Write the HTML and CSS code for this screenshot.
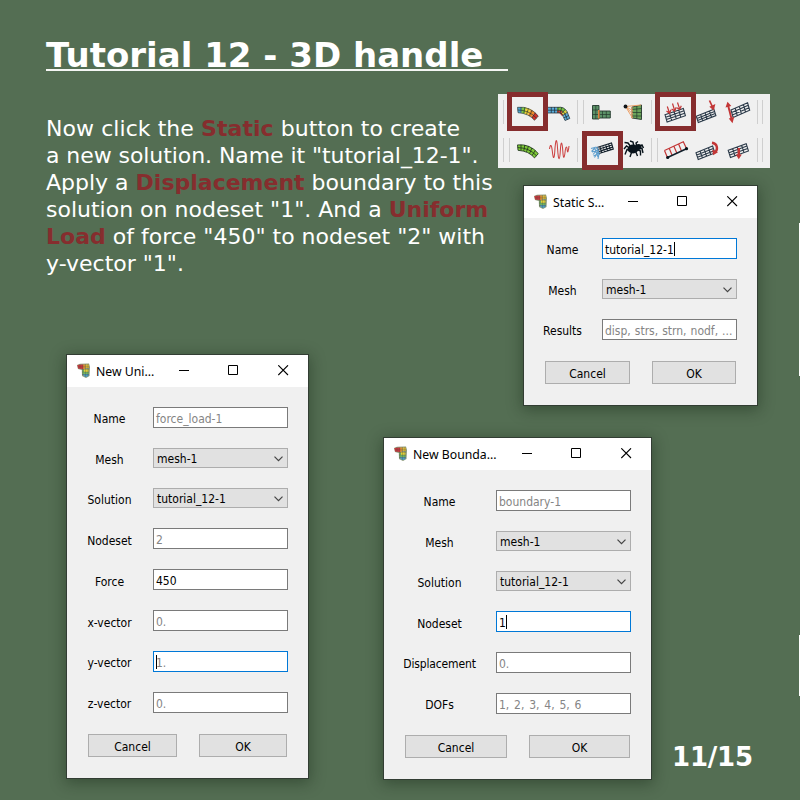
FILE: index.html
```
<!DOCTYPE html>
<html lang="en">
<head>
<meta charset="utf-8">
<title>Tutorial 12 - 3D handle</title>
<link rel="stylesheet" href="styles.css">
</head>
<body>
<svg width="0" height="0" class="defs">
  <defs>
    <symbol id="app" viewBox="0 0 13 15">
      <path d="M0 2L3 0.8L12 0.6L13 4L12.500 13L9 15L5 13L4.800 7L1 6Z" fill="#8b9878"/>
      <path d="M0.500 2L6 1.500V6L1 5.500Z" fill="#c8373f"/>
      <path d="M6 1.500H8.500V5L6 6.500Z" fill="#d98a35"/>
      <path d="M8.500 1.500H12V5H8.500Z" fill="#d9b93a"/>
      <path d="M7 6H11.500V9H7Z" fill="#dfd23c"/>
      <path d="M5.500 7H7V11H5.500ZM7 9H11.500V11H7Z" fill="#72b562"/>
      <path d="M5.500 11H12L11 13.500L8 14Z" fill="#4b9cc0"/>
      <path d="M1 3.800H12M8.500 1V14M11 1V13M5.800 2V12M3 1.500V6M5 6.500H12M5 9H12M5 11.500H12" stroke="#4a4d3e" stroke-width=".4" fill="none" opacity=".7"/>
    </symbol>
    <symbol id="min" viewBox="0 0 11 11"><path d="M0 5.500H10" stroke="#000"/></symbol>
    <symbol id="max" viewBox="0 0 11 11"><path d="M.5.5H9.500V9.500H.5Z" stroke="#000" fill="none"/></symbol>
    <symbol id="close" viewBox="0 0 11 11"><path d="M.3.300L10 10M10 .300L.3 10" stroke="#000" fill="none" stroke-width="1.100"/></symbol>
    <symbol id="chev" viewBox="0 0 9 6"><path d="M.5.700L4.500 4.700L8.500.700" stroke="#444" fill="none" stroke-width="1.200"/></symbol>
    <path id="mesh" d="M0 0H4V3H0ZM1 0V3M2 0V3M3 0V3M0 1H4M0 2H4" vector-effect="non-scaling-stroke"/>
    <path id="mesh5" d="M0 0H5V3H0ZM1 0V3M2 0V3M3 0V3M4 0V3M0 1H5M0 2H5" vector-effect="non-scaling-stroke"/>
    <path id="beam" d="M517.500 107.300Q530 106 538.300 116L534.500 120.300Q529 113.500 518 112.700ZM517.700 110Q529 110 536.500 118.200M521 107V112.800M524.800 107.300L523.800 113.300M528.500 108.500L526.500 114.300M532 110.300L529.500 116M535.300 112.800L532 118"/>
  </defs>
</svg>

<main class="slide">
  <h1 class="title">Tutorial 12 - 3D handle&nbsp;&nbsp;</h1>
  <p class="intro"><span class="loose">Now click the <b>Static</b> button to create</span><br>
    <span class="tight">a new solution. Name it "tutorial_12-1".</span><br>
    Apply a <b>Displacement</b> boundary to this<br>
    solution on nodeset "1". And a <b>Uniform</b><br>
    <b>Load</b> of force "450" to nodeset "2" with<br>
    y-vector "1".</p>

  <svg class="toolbar" viewBox="498 94 272 74">
    <rect x="498" y="94" width="272" height="74" fill="#f0f0f0"/>
    <path d="M503.500 100V124M577.500 100V124M583.500 100V124M651.500 100V124M757.500 100V124M762.500 100V124M503.500 138V162M509.500 138V162M577.500 138V162M651.500 138V162M657.500 138V162M757.500 138V162M762.500 138V162" stroke="#cfcfcf"/>
    <!-- static -->
    <path d="M517.500 107.300H522L521.500 113L518 112.700Z" fill="#4da5d4"/>
    <path d="M521.500 107.300L526 107.500L525 113.700L521.500 113Z" fill="#7dc83f"/>
    <path d="M526 107.500L531 109.600L528 115L524.500 113.700Z" fill="#f2d235"/>
    <path d="M531 109.600L535 112.500L531.500 117.300L528 115Z" fill="#ee8a2a"/>
    <path d="M535 112.500L538.300 116L534.500 120.300L531.500 117.300Z" fill="#d42f2a"/>
    <use href="#beam" fill="none" stroke="#27332f" stroke-width=".65"/>
    <!-- modal beam -->
    <path d="M548 107.300H557V113H548Z" fill="#5aadda"/>
    <path d="M557 107.300Q563 106 566 110.500L561.500 113.500Q560 112.500 557 113Z" fill="#79c83f"/>
    <path d="M557 110.500L561 110.300L564.500 114L562 116L559 112.800L557 113Z" fill="#dc4230"/>
    <path d="M566 110L567.500 113L563 115L561.500 112.500Z" fill="#d9cf3d"/>
    <path d="M567.500 113L569.800 118.500L565 120.500L563 115Z" fill="#5aadda"/>
    <path d="M548 107.300H558Q564 106.500 567 111.500L569.800 118.500L565 120.500L562 114Q560 112.500 557 113H548M548 110.200H558Q563 110 565 114L567.300 119.500M551.300 107V113M554.600 107V113M558 107V113M561.800 107.400L560 113M565.200 109.300L561.500 113.500M567.300 112.300L563 115.500M568.600 115.500L564 117.800" fill="none" stroke="#22303a" stroke-width=".75"/>
    <!-- buckling -->
    <path d="M592.500 105.500H599V119H592.500ZM599 111H610.300V118H599Z" fill="#5b9167" stroke="#24382c" stroke-width=".9"/>
    <path d="M592.500 110H599M592.500 114.500H599M595.800 105.500V119M602.500 111V118M606.300 111V118M599 114.500H610.300" stroke="#24382c" stroke-width=".7"/>
    <path d="M598.800 110V118.500" stroke="#e0843f" stroke-width="1.600"/>
    <!-- coupling -->
    <path d="M632 107L641.500 105V119.500L632 118Z" fill="#6ba35a" stroke="#24382c" stroke-width=".9"/>
    <path d="M636.800 106V119M632 112.500H641.500M632 116H641.500M632 109.500L641.500 108.500" stroke="#24382c" stroke-width=".7"/>
    <path d="M625.500 106.500L641 105M625.500 106.500L632.500 110.500M625.500 106.500L632.500 114M625.500 106.500L632.500 118M632 107V118.500" stroke="#eda066" stroke-width="1" fill="none"/>
    <circle cx="625.500" cy="106.500" r="1.900" fill="#10151a"/>
    <!-- uniform load -->
    <use href="#mesh" transform="matrix(4.580 -1.580 .7 2.450 665 114.700)" class="mesh"/>
    <path d="M667.300 106.500L669.500 113M672.500 103.500L674.500 110M677.500 102.500L679.500 108.500M666.500 111L669.500 113.300L671 109.800M671.600 109L674.700 111L676.200 107.300M676.800 107.800L679.700 109.500L681.300 105.800" class="red"/>
    <!-- point load -->
    <use href="#mesh" transform="matrix(4.400 -1.750 .67 2.100 696.300 116.300)" class="mesh"/>
    <path d="M709.500 100.500L713 108" stroke="#c33636" stroke-width="1.700"/>
    <path d="M709.300 106.800L715.400 104L713.800 110.500Z" fill="#c33636"/>
    <!-- double arrow -->
    <use href="#mesh" transform="matrix(4.150 -1.800 .7 2.500 731 110)" class="mesh"/>
    <path d="M728 105L731.800 120" stroke="#c33636" stroke-width="1.900"/>
    <path d="M725.500 107.500L727.500 101.800L731.300 106ZM728.800 118.500L734.200 117L732.500 123.200Z" fill="#c33636"/>
    <!-- dynamic beam -->
    <g transform="translate(0 37.600)"><use href="#beam" fill="#80cc38" stroke="#20351f" stroke-width=".85"/></g>
    <!-- wave -->
    <path d="M549.500 149C550.500 143.500 551.500 144.500 552.300 151C553.500 162 554.500 158 555 148C556 137 557 139 557.600 149C558.500 163 559.800 160 560.300 151C561 139 562.200 142 562.800 151C563.400 161 564.500 158 565.300 150C566 146 567 146 567.200 150C567.500 154 568.500 151 569 146" fill="none" stroke="#cc4242" stroke-width="1.050"/>
    <!-- boundary -->
    <use href="#mesh5" transform="matrix(2.900 -.9 .6 2.050 597 147.500)" class="mesh dark"/>
    <path d="M591 148.500L596.500 147M592 152L597.500 150.500M593.500 156L598.500 153.500M597 147L599.500 155M595.500 147.500L591.500 151.500M597.500 149.500L593 154.500M598 152L594.500 157.500M599 154L598 159M594.500 147.500L598 157" stroke="#5f9fce" stroke-width="1.100" fill="none"/>
    <!-- spider -->
    <ellipse cx="633" cy="149" rx="5.500" ry="4.400" fill="#08131b"/>
    <circle cx="638.500" cy="147" r="3" fill="#08131b"/>
    <path d="M631 147L628 143L624.500 142.500M631 149L626.500 146L624 149M631 150L627 149.500L625 154.500M632 151L630 157M634 147L633 142L630 141M637 147L636 143L638 141.500M638 147L642 145L643.500 148M638 148L642 148.500L643 153M636 149L640.500 151L640.500 155.500M635 150L637.500 156" stroke="#08131b" stroke-width="1.400" fill="none"/>
    <!-- line load -->
    <path d="M664.500 150.500L683.300 141.800L686.500 148.500M664.500 150.500L667.300 157.300M669.200 148.300L672 155M673.900 146.200L676.800 153M678.600 144L681.500 151" class="red"/>
    <path d="M667.500 157.500L686.500 148.700" stroke="#10202c" stroke-width="1.500"/>
    <circle cx="667.700" cy="157.500" r="1.600" fill="#08131b"/><circle cx="686.500" cy="148.700" r="1.600" fill="#08131b"/>
    <!-- moment -->
    <use href="#mesh" transform="matrix(4.150 -1.650 .75 2.300 696 152.700)" class="mesh"/>
    <path d="M712 142.800C717.500 143.500 718 149 715.500 152" fill="none" stroke="#c33636" stroke-width="2.400"/>
    <path d="M712.300 149.500L718 152.300L713 155.200Z" fill="#c33636"/>
    <!-- gravity -->
    <use href="#mesh" transform="matrix(4.500 -1.650 .75 2.400 728.200 150.300)" class="mesh"/>
    <path d="M738.800 148V156" stroke="#c33636" stroke-width="2.400"/>
    <path d="M735.800 154.500H741.800L738.800 159.200Z" fill="#c33636"/>
    <!-- highlights -->
    <path d="M509.500 94.500H545.500V128.500H509.500ZM584.500 133.500H620.500V167.500H584.500ZM657.500 94.500H693.500V128.500H657.500Z" fill="none" stroke="#862d2e" stroke-width="5"/>
  </svg>

  <section class="window static">
    <header class="bar"><svg class="app"><use href="#app"/></svg><span class="caption">Static S...</span>
      <svg class="ctl"><use href="#min"/></svg><svg class="ctl"><use href="#max"/></svg><svg class="ctl"><use href="#close"/></svg></header>
    <div class="form">
      <label>Name</label><div class="input focus">tutorial_12-1<i class="caret"></i></div>
      <label>Mesh</label><div class="combo">mesh-1<svg><use href="#chev"/></svg></div>
      <label>Results</label><div class="input hint results">disp, strs, strn, nodf, ...</div>
    </div>
    <div class="actions"><div class="button">Cancel</div><div class="button">OK</div></div>
  </section>

  <section class="window uniform">
    <header class="bar"><svg class="app"><use href="#app"/></svg><span class="caption">New Uni...</span>
      <svg class="ctl"><use href="#min"/></svg><svg class="ctl"><use href="#max"/></svg><svg class="ctl"><use href="#close"/></svg></header>
    <div class="form">
      <label>Name</label><div class="input hint">force_load-1</div>
      <label>Mesh</label><div class="combo">mesh-1<svg><use href="#chev"/></svg></div>
      <label>Solution</label><div class="combo">tutorial_12-1<svg><use href="#chev"/></svg></div>
      <label class="low">Nodeset</label><div class="input hint">2</div>
      <label class="low">Force</label><div class="input">450</div>
      <label class="low">x-vector</label><div class="input hint">0.</div>
      <label>y-vector</label><div class="input hint focus"><i class="caret start"></i>1.</div>
      <label>z-vector</label><div class="input hint">0.</div>
    </div>
    <div class="actions"><div class="button">Cancel</div><div class="button">OK</div></div>
  </section>

  <section class="window boundary">
    <header class="bar"><svg class="app"><use href="#app"/></svg><span class="caption">New Bounda...</span>
      <svg class="ctl"><use href="#min"/></svg><svg class="ctl"><use href="#max"/></svg><svg class="ctl"><use href="#close"/></svg></header>
    <div class="form">
      <label>Name</label><div class="input hint">boundary-1</div>
      <label>Mesh</label><div class="combo">mesh-1<svg><use href="#chev"/></svg></div>
      <label>Solution</label><div class="combo">tutorial_12-1<svg><use href="#chev"/></svg></div>
      <label class="low">Nodeset</label><div class="input focus">1<i class="caret"></i></div>
      <label class="long">Displacement</label><div class="input hint">0.</div>
      <label>DOFs</label><div class="input hint dofs">1, 2, 3, 4, 5, 6</div>
    </div>
    <div class="actions"><div class="button">Cancel</div><div class="button">OK</div></div>
  </section>

  <div class="page">11/15</div>
  <div class="edge upper"></div>
  <div class="edge lower"></div>
</main>
</body>
</html>
```
FILE: styles.css
```
* { box-sizing: border-box; }
body { margin: 0; }
.defs { position: absolute; }

.slide {
  position: relative;
  width: 800px;
  height: 800px;
  overflow: hidden;
  padding: 35px 0 0 46px;
  background: #546e53;
  color: #fff;
  font-family: "DejaVu Sans", sans-serif;
}
.title {
  width: 462px;
  margin: 0;
  height: 36px;
  border-bottom: 2px solid #f4f6f4;
  font-size: 34px;
  line-height: 40px;
  font-weight: bold;
  white-space: nowrap;
}
.intro {
  margin: 44px 0 0;
  font-size: 22px;
  line-height: 27px;
  white-space: nowrap;
}
.intro b { color: #862d2e; }
.loose { letter-spacing: .06px; }
.tight { letter-spacing: -.07px; }

.toolbar {
  position: absolute;
  left: 498px;
  top: 94px;
  width: 272px;
  height: 74px;
  overflow: visible;
}
.mesh { fill: none; stroke: #2b3a49; stroke-width: 1.1px; }
.dark { stroke: #16232e; }
.red { fill: none; stroke: #c33636; stroke-width: 1.2px; }

.window {
  position: absolute;
  border: 1px solid #323d33;
  background: #f0f0f0;
  color: #000;
  box-shadow: 0 3px 14px 1px rgba(20, 35, 20, .42);
  font: 12px/19px "DejaVu Sans Condensed", "DejaVu Sans", sans-serif;
  font-stretch: condensed;
}
.static { left: 523px; top: 185px; width: 235px; height: 221px; --label: 78px; --ok: 84px; }
.uniform { left: 66px; top: 354px; width: 243px; height: 425px; --label: 86px; --ok: 88px; }
.boundary { left: 383px; top: 437px; width: 269px; height: 343px; --label: 112px; --ok: 101px; }

.bar {
  display: flex;
  align-items: flex-start;
  height: 32px;
  padding: 0 19px 0 10px;
  background: #fff;
}
.app { width: 13px; height: 15px; margin-top: 8px; }
.caption {
  flex: 1;
  margin: 8px 0 0 6px;
  font: 12.25px/17px "Noto Sans", sans-serif;
  white-space: nowrap;
}
.ctl { width: 11px; height: 11px; margin: 10px 0 0 39px; }
.caption + .ctl { margin: 10px -1px 0 0; }

.form {
  display: grid;
  grid-template-columns: var(--label) 135px;
  row-gap: 20px;
  padding-top: 20px;
}
label { height: 20px; line-height: 24px; text-align: center; white-space: nowrap; padding-right: 1px; }
.low { line-height: 26px; }
.long { letter-spacing: -.15px; }
.input, .combo { display: flex; border: 1px solid #7a7a7a; white-space: pre; overflow: hidden; }
.input { height: 21px; padding-left: 2px; background: #fff; line-height: 22px; }
.combo {
  height: 20px;
  padding: 0 4px 0 3px;
  justify-content: space-between;
  border-color: #adadad;
  background: #e1e1e1;
  line-height: 20px;
}
.combo svg { width: 9px; height: 6px; margin-top: 7px; }
.focus { border-color: #0078d7; }
.hint { color: #858585; }
.results { word-spacing: .6px; }
.dofs { word-spacing: 1.4px; }
.caret { width: 1px; height: 14px; margin-top: 3px; background: #000; }
.start { margin-right: -1px; }

.actions { display: flex; gap: 22px; padding: 21px 21px 0; }
.button {
  flex: 1;
  height: 23px;
  border: 1px solid #adadad;
  background: #e1e1e1;
  line-height: 24px;
  text-align: center;
}
.button:last-child { flex: 0 0 var(--ok); }

.page { position: absolute; left: 672px; top: 742px; font-size: 26px; line-height: 31px; font-weight: bold; letter-spacing: -.2px; }
.edge { position: absolute; right: 0; width: 1px; background: #fff; }
.upper { top: 223px; height: 153px; }
.lower { top: 635px; height: 61px; }
```
